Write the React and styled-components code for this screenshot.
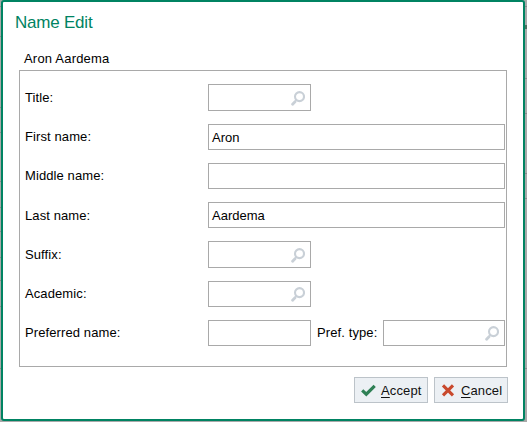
import React from "react";
import styled, { createGlobalStyle } from "styled-components";

const Global = createGlobalStyle`
  * { box-sizing: border-box; }
  body { margin: 0; overflow: hidden; font: 13px/16px "Liberation Sans", Arial, sans-serif; color: #000; }
`;

const line = (y, h = 1, color = "#8b8b8b") => `linear-gradient(${color}, ${color}) 0 ${y}px / 100% ${h}px no-repeat`;

const Page = styled.div`
  width: 527px;
  height: 422px;
  display: grid;
  grid-template-columns: 1px 524px 2px;
  grid-template-rows: 421px 1px;
  background: #a9a9a9;
`;

const Edge = styled.div`
  background: ${({ $marks }) => $marks.map((m) => line(...m)).join(", ")};
`;

const Dialog = styled.section`
  display: flex;
  flex-direction: column;
  border: 2px solid #008362;
  border-radius: 3px;
  background: #fff;
  padding: 12px 16px 0;
`;

const Heading = styled.h1`
  margin: 0 0 0 -4px;
  height: 37px;
  font-size: 17px;
  line-height: 18px;
  letter-spacing: -0.22px;
  font-weight: 400;
  color: #008362;
`;

const PersonName = styled.div`
  height: 19px;
  padding-left: 5px;
  letter-spacing: 0.2px;
`;

const Panel = styled.div`
  width: 488px;
  height: 297px;
  border: 1px solid #a9a9a9;
  padding: 13px 1px 0 5px;
  display: grid;
  grid-template-rows: 40px 39px 39px 39px 40px 39px 26px;
`;

const Row = styled.div`
  display: flex;
  align-items: flex-start;
`;

const Label = styled.label`
  width: ${({ $width }) => $width}px;
  line-height: ${({ $low }) => ($low ? 28 : 26)}px;
  letter-spacing: 0.1px;
  white-space: nowrap;
  padding-left: ${({ $indent }) => $indent || 0}px;
`;

const Field = styled.div`
  width: ${({ $width }) => $width}px;
  height: ${({ $tall }) => ($tall ? 27 : 26)}px;
  border: 1px solid #a9a9a9;
  padding: ${({ $tall }) => ($tall ? 1 : 0)}px 3px 0;
  line-height: 26px;
  display: flex;
  justify-content: space-between;
`;

const Lens = styled.svg`
  width: 14px;
  height: 15px;
  margin: 5px 2px 0 auto;
`;

const Actions = styled.footer`
  display: flex;
  gap: 6px;
  justify-content: flex-end;
  margin-top: 10px;
  width: 489px;
`;

const Button = styled.button`
  width: 74px;
  height: 26px;
  border: 1px solid #bcc3c9;
  background: #ecf0f4;
  font: inherit;
  letter-spacing: 0.12px;
  color: #111;
  padding: 1px 0 0 6px;
  display: flex;
  align-items: center;
  gap: 5px;
`;

const Glyph = styled.svg`
  width: 15px;
  height: 14px;
  flex: none;
`;

const Key = styled.span`
  text-decoration: underline;
  text-underline-offset: 2px;
  text-decoration-thickness: 1px;
`;

const Search = () => (
  <Lens viewBox="0 0 14 15" fill="none" stroke="#c9d0d7">
    <circle cx="8.5" cy="5.6" r="4.5" strokeWidth="2.100" />
    <path d="M5.300 9L4 10.500" strokeWidth="1.600" />
    <path d="M4 10.800L1.600 13.300" strokeWidth="2.800" strokeLinecap="round" />
  </Lens>
);

const rows = [
  { label: "Title:", width: 103, search: true, tall: true, low: true },
  { label: "First name:", width: 297, value: "Aron" },
  { label: "Middle name:", width: 297 },
  { label: "Last name:", width: 297, value: "Aardema", low: true },
  { label: "Suffix:", width: 103, search: true, tall: true, low: true },
  { label: "Academic:", width: 103, search: true },
];

export default function App() {
  return (
    <>
      <Global />
      <Page>
        <Edge $marks={[[6], [36], [107], [132], [181], [207], [231], [257], [280], [306], [368]]} />
        <Dialog>
          <Heading>Name Edit</Heading>
          <PersonName>Aron Aardema</PersonName>
          <Panel>
            {rows.map(({ label, width, value, search, tall, low }) => (
              <Row key={label}>
                <Label $width={183} $low={low}>{label}</Label>
                <Field $width={width} $tall={tall}>{value}{search && <Search />}</Field>
              </Row>
            ))}
            <Row>
              <Label $width={183}>Preferred name:</Label>
              <Field $width={103} />
              <Label $width={72} $indent={6}>Pref. type:</Label>
              <Field $width={122}><Search /></Field>
            </Row>
          </Panel>
          <Actions>
            <Button>
              <Glyph viewBox="0 0 15 14"><path d="M1.200 6.300L5.300 10.200L13.700 1.900" fill="none" stroke="#2f8055" strokeWidth="3.200" /></Glyph>
              <span><Key>A</Key>ccept</span>
            </Button>
            <Button>
              <Glyph viewBox="0 0 15 14"><path d="M2 1.400L12 11.400M12 1.400L2 11.400" fill="none" stroke="#c9492d" strokeWidth="3.100" /></Glyph>
              <span><Key>C</Key>ancel</span>
            </Button>
          </Actions>
        </Dialog>
        <Edge $marks={[[6], [25, 4, "#50705f"], [78], [113], [173], [198], [368]]} />
      </Page>
    </>
  );
}
